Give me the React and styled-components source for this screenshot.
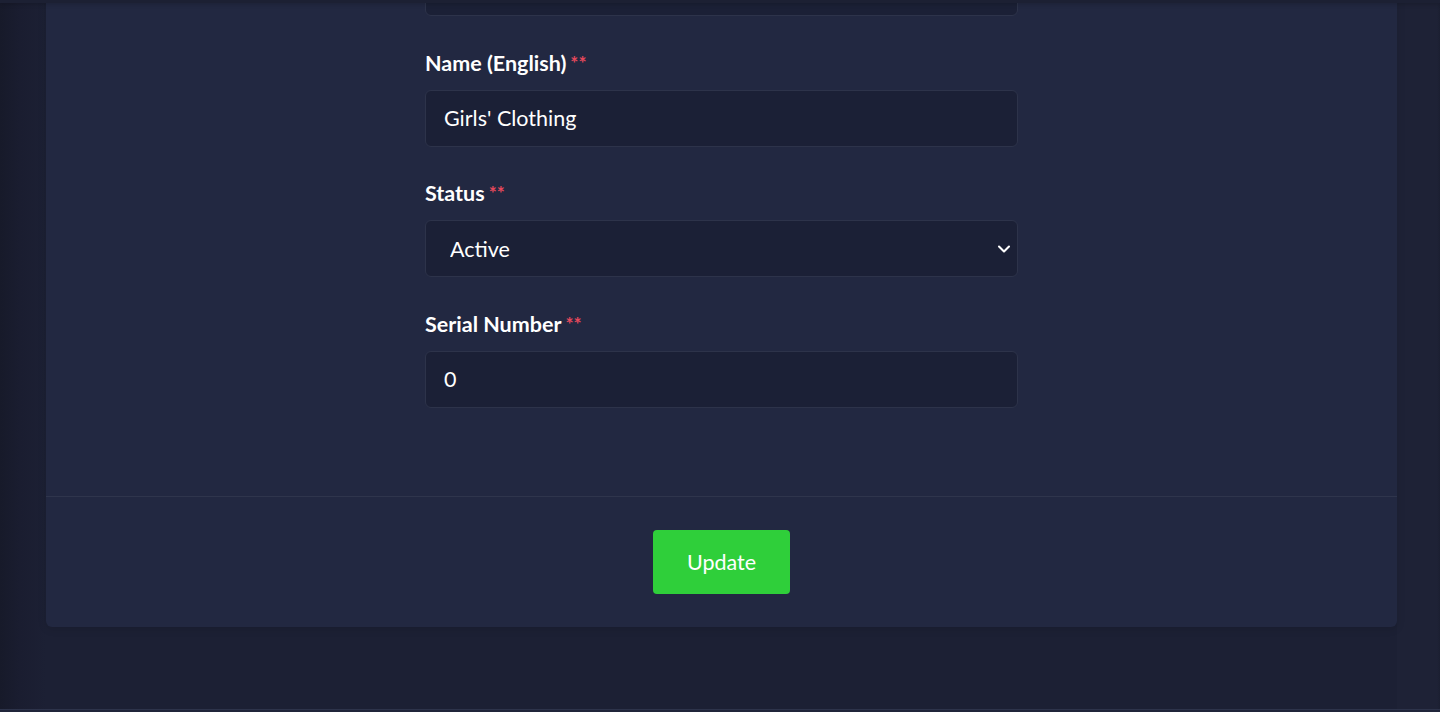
import React, { useState } from 'react'
import styled, { createGlobalStyle } from 'styled-components';
import { ChevronDown } from 'lucide-react';

const GlobalStyle = createGlobalStyle`
  html, body {
    margin: 0;
    padding: 0;
    background: #1c2034;
    font-family: Lato, "Open Sans", sans-serif;
    overflow: hidden;
  }
  * { box-sizing: border-box; }
`;

const Page = styled.div`
  min-height: 100vh;
  display: flex;
  flex-direction: column;
  background: linear-gradient(to right, #171a2a 0px, #1a1d30 20px, #1c2034 46px);
`;

const TopShade = styled.div`
  position: fixed;
  top: 0;
  left: 0;
  right: 0;
  height: 3px;
  background: #1c2033;
  box-shadow: 0 1px 4px rgba(0, 0, 0, 0.25);
  z-index: 2;
`;

const Content = styled.main`
  flex: 1;
  padding: 0 43px 82px 46px;
  background: linear-gradient(to left, #1b1f31 0px, #1e2236 3px, #1e2236 43px, transparent 43px);
`;

// page is scrolled: the top of the card sits above the viewport
const Card = styled.section`
  margin-top: -60px;
  background: #222841;
  border-radius: 6px;
  box-shadow: 0 2px 8px rgba(0, 0, 0, 0.12);
`;

const CardBody = styled.form`
  max-width: 593px;
  margin: 0 auto;
  padding: 19px 0 88px;
  display: flex;
  flex-direction: column;
  gap: 33.5px;
`;

const Field = styled.div`
  display: flex;
  flex-direction: column;
  gap: 15px;
`;

const Label = styled.label`
  font-size: 21.5px;
  line-height: 24px;
  padding-top: 1px;
  font-weight: 700;
  color: #ffffff;
`;

const Required = styled.span`
  color: #e5485c;
  font-size: 19px;
  margin-left: 4px;
  vertical-align: top;
`;

const TextInput = styled.input`
  height: 57px;
  width: 100%;
  background: #1b2036;
  border: 1px solid #2d334a;
  border-radius: 6px;
  padding: 0 18px;
  font-family: Lato, "Open Sans", sans-serif;
  font-size: 21.5px;
  color: #ffffff;
  outline: none;
`;

const SelectWrap = styled.div`
  position: relative;
`;

const Select = styled.select`
  appearance: none;
  height: 57px;
  width: 100%;
  background: #1b2036;
  border: 1px solid #2d334a;
  border-radius: 6px;
  padding: 0 24px;
  font-family: Lato, "Open Sans", sans-serif;
  font-size: 21.5px;
  color: #ffffff;
  outline: none;
`;

const Chevron = styled(ChevronDown)`
  position: absolute;
  right: 4px;
  top: 50%;
  transform: translateY(-50%);
  pointer-events: none;
  color: #ffffff;
`;

const CardFooter = styled.div`
  border-top: 1px solid #2f354c;
  padding: 33px 0;
  display: flex;
  justify-content: center;
`;

const UpdateButton = styled.button`
  width: 137px;
  height: 64px;
  background: #2fcf3a;
  color: #ffffff;
  border: none;
  border-radius: 4px;
  font-family: Lato, "Open Sans", sans-serif;
  font-size: 21.5px;
  padding-top: 2px;
  cursor: pointer;
`;

const Footer = styled.footer`
  height: 60px;
  border-top: 1px solid #2d334a;
  background: #20253a;
`;

function App() {
    const [nameBn, setNameBn] = useState("")
    const [nameEn, setNameEn] = useState("Girls' Clothing")
    const [status, setStatus] = useState("active")
    const [serial, setSerial] = useState("0")

    return (
        <Page>
            <GlobalStyle />
            <TopShade />
            <Content>
                <Card>
                    <CardBody onSubmit={(e) => e.preventDefault()}>
                        <TextInput aria-label="Name (Bangla)" value={nameBn} onChange={(e) => setNameBn(e.target.value)} />
                        <Field>
                            <Label>Name (English)<Required>**</Required></Label>
                            <TextInput value={nameEn} onChange={(e) => setNameEn(e.target.value)} />
                        </Field>
                        <Field>
                            <Label>Status<Required>**</Required></Label>
                            <SelectWrap>
                                <Select value={status} onChange={(e) => setStatus(e.target.value)}>
                                    <option value="active">Active</option>
                                    <option value="inactive">Inactive</option>
                                </Select>
                                <Chevron size={20} strokeWidth={2.5} />
                            </SelectWrap>
                        </Field>
                        <Field>
                            <Label>Serial Number<Required>**</Required></Label>
                            <TextInput value={serial} onChange={(e) => setSerial(e.target.value)} />
                        </Field>
                    </CardBody>
                    <CardFooter>
                        <UpdateButton type='submit'>Update</UpdateButton>
                    </CardFooter>
                </Card>
            </Content>
            <Footer />
        </Page>
    )
}

export default App
